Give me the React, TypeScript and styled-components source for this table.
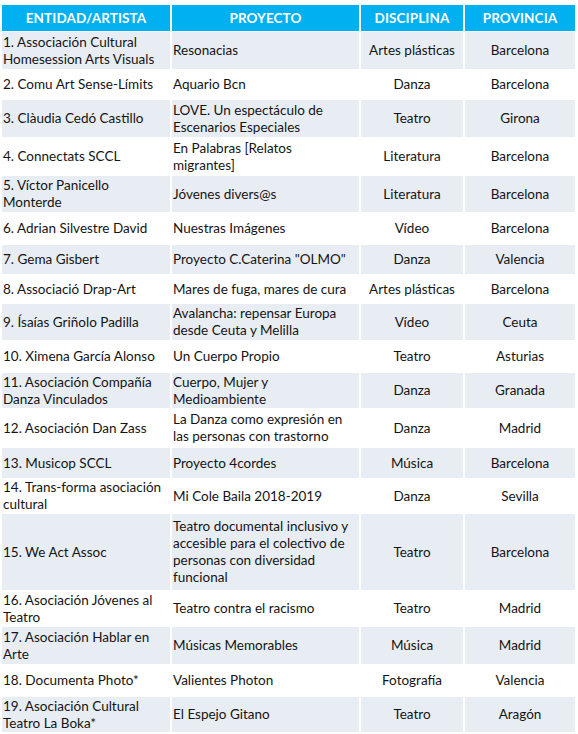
import React from "react";
import styled, { createGlobalStyle } from "styled-components";

const GlobalStyle = createGlobalStyle`
  html, body { margin: 0; padding: 0; background: #ffffff; }
  body { font-family: Lato, "Open Sans", "Liberation Sans", sans-serif; }
`;

const Page = styled.div`
  padding: 5px 3px 0 2px;
  width: 578px;
  box-sizing: border-box;
`;

const Table = styled.div`
  display: grid;
  grid-template-columns: 168px 187px 102px 110px;
  column-gap: 2px;
`;

const HeaderCell = styled.div`
  background: #00b0f0;
  color: #ffffff;
  font-weight: 700;
  font-size: 13.5px;
  height: 26px;
  margin-bottom: 1px;
  display: flex;
  align-items: center;
  justify-content: center;
  letter-spacing: 0.1px;
`;

const Cell = styled.div<{ $striped: boolean; $h: number; $center?: boolean; $left: number }>`
  background: ${(p) => (p.$striped ? "#e8edf4" : "#ffffff")};
  height: ${(p) => p.$h}px;
  display: flex;
  align-items: center;
  justify-content: ${(p) => (p.$center ? "center" : "flex-start")};
  text-align: ${(p) => (p.$center ? "center" : "left")};
  padding-left: ${(p) => (p.$center ? 0 : p.$left)}px;
  color: #141414;
  font-size: 13.5px;
  line-height: 17px;
  white-space: pre-line;
`;

type Row = { a: string; b: string; c: string; d: string; h: number };

const rows: Row[] = [
  { a: "1. Associación Cultural\nHomesession Arts Visuals", b: "Resonacias", c: "Artes plásticas", d: "Barcelona", h: 37 },
  { a: "2. Comu Art Sense-Límits", b: "Aquario Bcn", c: "Danza", d: "Barcelona", h: 31 },
  { a: "3. Clàudia Cedó Castillo", b: "LOVE. Un espectáculo de\nEscenarios Especiales", c: "Teatro", d: "Girona", h: 37 },
  { a: "4. Connectats SCCL", b: "En Palabras [Relatos\nmigrantes]", c: "Literatura", d: "Barcelona", h: 39 },
  { a: "5. Víctor Panicello\nMonterde", b: "Jóvenes divers@s", c: "Literatura", d: "Barcelona", h: 36 },
  { a: "6. Adrian Silvestre David", b: "Nuestras Imágenes", c: "Vídeo", d: "Barcelona", h: 33 },
  { a: "7. Gema Gisbert", b: "Proyecto C.Caterina \"OLMO\"", c: "Danza", d: "Valencia", h: 29 },
  { a: "8. Associació Drap-Art", b: "Mares de fuga, mares de cura", c: "Artes plásticas", d: "Barcelona", h: 30 },
  { a: "9. Ísaías Griñolo Padilla", b: "Avalancha: repensar Europa\ndesde Ceuta y Melilla", c: "Vídeo", d: "Ceuta", h: 36 },
  { a: "10. Ximena García Alonso", b: "Un Cuerpo Propio", c: "Teatro", d: "Asturias", h: 33 },
  { a: "11. Asociación Compañía\nDanza Vinculados", b: "Cuerpo, Mujer y\nMedioambiente", c: "Danza", d: "Granada", h: 35 },
  { a: "12. Asociación Dan Zass", b: "La Danza como expresión en\nlas personas con trastorno", c: "Danza", d: "Madrid", h: 40 },
  { a: "13. Musicop SCCL", b: "Proyecto 4cordes", c: "Música", d: "Barcelona", h: 30 },
  { a: "14. Trans-forma asociación\ncultural", b: "Mi Cole Baila 2018-2019", c: "Danza", d: "Sevilla", h: 36 },
  { a: "15. We Act Assoc", b: "Teatro documental inclusivo y\naccesible para el colectivo de\npersonas con diversidad\nfuncional", c: "Teatro", d: "Barcelona", h: 76 },
  { a: "16. Asociación Jóvenes al\nTeatro", b: "Teatro contra el racismo", c: "Teatro", d: "Madrid", h: 37 },
  { a: "17. Asociación Hablar en\nArte", b: "Músicas Memorables", c: "Música", d: "Madrid", h: 37 },
  { a: "18. Documenta Photo*", b: "Valientes Photon", c: "Fotografía", d: "Valencia", h: 33 },
  { a: "19. Asociación Cultural\nTeatro La Boka*", b: "El Espejo Gitano", c: "Teatro", d: "Aragón", h: 35 },
];

export default function App() {
  return (
    <Page>
      <GlobalStyle />
      <Table>
        <HeaderCell>ENTIDAD/ARTISTA</HeaderCell>
        <HeaderCell>PROYECTO</HeaderCell>
        <HeaderCell>DISCIPLINA</HeaderCell>
        <HeaderCell>PROVINCIA</HeaderCell>
        {rows.map((r, i) => {
          const s = i % 2 === 0;
          return (
            <React.Fragment key={i}>
              <Cell $striped={s} $h={r.h} $left={1}>{r.a}</Cell>
              <Cell $striped={s} $h={r.h} $left={1}>{r.b}</Cell>
              <Cell $striped={s} $h={r.h} $left={0} $center>{r.c}</Cell>
              <Cell $striped={s} $h={r.h} $left={0} $center>{r.d}</Cell>
            </React.Fragment>
          );
        })}
      </Table>
    </Page>
  );
}
